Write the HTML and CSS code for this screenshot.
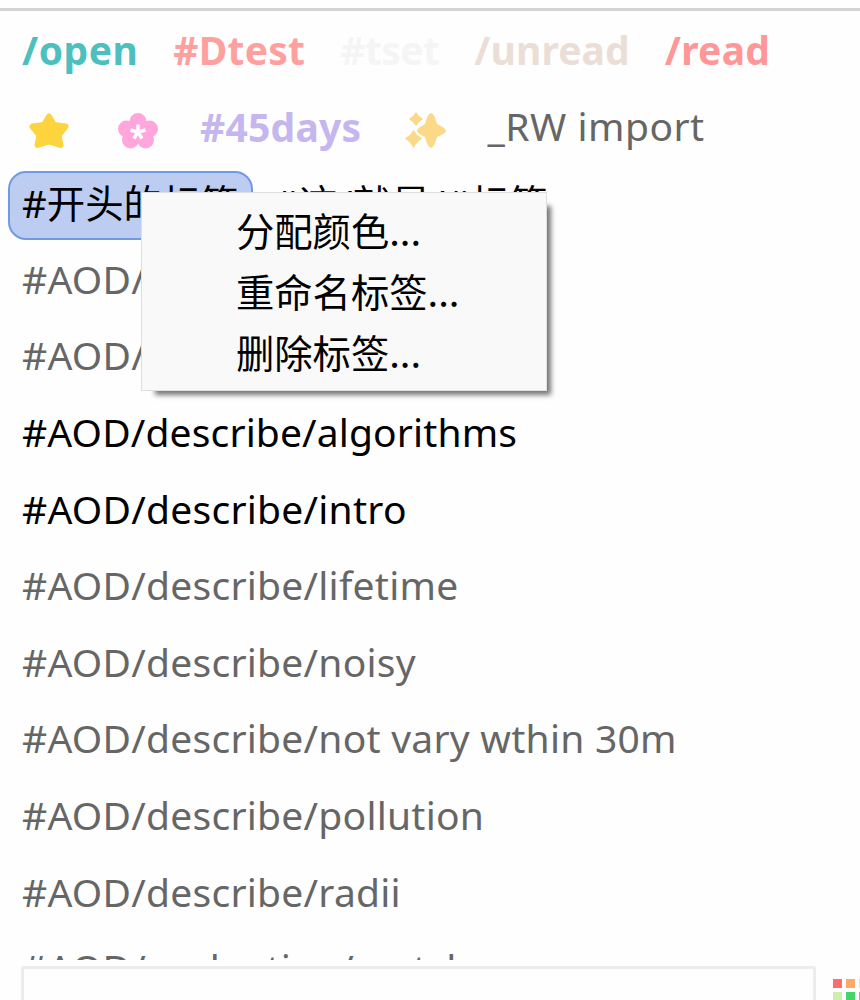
FILE: index.html
```html
<!DOCTYPE html>
<html lang="zh-CN">
<head>
<meta charset="utf-8">
<title>Tags</title>
<link rel="stylesheet" href="styles.css">
</head>
<body>
<main class="panel">
  <div class="tags">
    <div class="row low bold">
      <span class="tag teal">/open</span><span class="tag salmon">#Dtest</span><span class="tag faint">#tset</span><span class="tag beige">/unread</span><span class="tag red">/read</span>
    </div>
    <div class="row low">
      <span class="tag icon"><svg width="42" height="38" viewBox="0 0 42 38"><path d="M21 4.500 L26 13 L37.500 14.500 L30.500 23 L32.500 33 L21 29.500 L9.500 33 L11.500 23 L4.500 14.500 L16 13Z" fill="#fdd43d" stroke="#fdd43d" stroke-width="6" stroke-linejoin="round"/></svg></span>
      <span class="tag icon"><svg width="42" height="38" viewBox="0 0 42 38"><g fill="#ffa6dc"><circle cx="21" cy="9.500" r="8.500"/><circle cx="9.500" cy="17" r="8.500"/><circle cx="32.500" cy="17" r="8.500"/><circle cx="13.500" cy="28" r="8.500"/><circle cx="28.500" cy="28" r="8.500"/><circle cx="21" cy="21" r="9"/></g><path d="M21 20V12.500M21 20L13.500 18M21 20L28.500 18M21 20L17 26.500M21 20L25 26.500" stroke="#fff" stroke-width="3.400"/></svg></span>
      <span class="tag bold lilac">#45days</span>
      <span class="tag icon sparkle"><svg width="42" height="38" viewBox="0 0 42 38"><g fill="#fcd988"><path d="M26 1Q29 1 32 12Q41 16 41 19Q41 21 32 25Q29 36 26 36Q23 36 20 25Q12 21 12 19Q12 16 20 12Q23 1 26 1Z"/><path d="M11 1Q13 5 17 7Q13 9 11 13Q9 9 5 7Q9 5 11 1ZM8.500 19Q11 24 16 26.500Q11 29 8.500 35Q6 29 1 26.500Q6 24 8.500 19Z" stroke="#fcd988" stroke-width="1.500" stroke-linejoin="round"/></g></svg></span>
      <span class="tag import">_RW import</span>
    </div>
    <div class="row cjk"><span class="tag selected">#开头的标签</span><span class="tag dark path">#这/就是/#标签</span></div>
    <div class="row"><span class="tag">#AOD/describe</span></div>
    <div class="row"><span class="tag">#AOD/describe</span></div>
    <div class="row"><span class="tag dark snug">#AOD/describe/algorithms</span></div>
    <div class="row"><span class="tag dark">#AOD/describe/intro</span></div>
    <div class="row"><span class="tag">#AOD/describe/lifetime</span></div>
    <div class="row"><span class="tag">#AOD/describe/noisy</span></div>
    <div class="row"><span class="tag">#AOD/describe/not vary wthin 30m</span></div>
    <div class="row"><span class="tag">#AOD/describe/pollution</span></div>
    <div class="row"><span class="tag">#AOD/describe/radii</span></div>
    <div class="row"><span class="tag">#AOD/evaluation/match</span></div>
  </div>
  <div class="footer">
    <div class="search"></div>
    <div class="swatches"><i class="s1"></i><i class="s2"></i><i class="s3"></i><i class="s4"></i><i class="s5"></i><i class="s6"></i></div>
  </div>
</main>
<div class="menu">
  <div class="item">分配颜色...</div>
  <div class="item">重命名标签...</div>
  <div class="item">删除标签...</div>
</div>
</body>
</html>
```
FILE: styles.css
```css
* { box-sizing: border-box; }
body { margin: 0; background: #fefefe; font-family: "Noto Sans", "Noto Sans CJK SC", sans-serif; font-size: 39px; letter-spacing: 0.25px; color: #666; }
.panel { height: 1000px; overflow: hidden; padding-top: 8px; }
.tags { height: 952px; overflow: hidden; border-top: 3px solid #d3d3d3; padding: 7px 0 0 8px; }
.row { display: flex; gap: 7px; height: 69px; margin-bottom: 7.6px; white-space: pre; }
.tag { height: 69px; line-height: 60px; padding: 0 13px; border: 1px solid transparent; }
.low .tag { line-height: 62px; }
.low .import { line-height: 60px; }
.bold { font-weight: 700; }
.teal { color: #4dbfbe; letter-spacing: 0.5px; }
.salmon { color: #ffa09f; }
.faint { color: #f5f5f5; letter-spacing: -0.6px; }
.beige { color: #ebded7; letter-spacing: 0.1px; }
.red { color: #ff9697; }
.lilac { color: #c5b6ef; }
.import { letter-spacing: 0.5px; }
.snug { letter-spacing: 0.14px; }
.dark { color: #000; }
.cjk { font-size: 38.4px; letter-spacing: 0; }
.cjk .tag { line-height: 62px; }
.cjk .path { letter-spacing: 0.5px; }
.selected { color: #000; background: #bccdf1; border: 2px solid #7299e3; border-radius: 18px; padding: 0 12px; }
.cjk .selected { line-height: 60px; }
.icon { display: flex; align-items: center; justify-content: center; width: 82px; padding-top: 3px; }
.sparkle { width: 84px; padding: 3px 11px 0 15px; }
.footer { display: flex; gap: 17px; padding: 6px 0 0 21px; height: 40px; }
.search { flex: none; width: 795px; height: 60px; border: 3px solid #ececec; border-radius: 3px; }
.swatches { display: grid; flex: none; grid-template-columns: repeat(3, 9px); grid-auto-rows: 9px; gap: 4px; padding-top: 13px; }
.s1 { background: #fc6d6d; }
.s2 { background: #fda967; }
.s3 { background: #fce17a; }
.s4 { background: #cdefac; }
.s5 { background: #45d46a; }
.s6 { background: #82aefa; }
.menu { position: absolute; left: 141px; top: 192px; width: 406px; height: 199px; padding: 6px 0 0 94px; background: #f9f9f9; border: 1px solid #dedede; box-shadow: 9px 9px 5px -5px #777; color: #000; font-family: "Noto Sans CJK SC", sans-serif; font-size: 38.3px; letter-spacing: 0; }
.item { height: 61px; line-height: 61px; }
```
